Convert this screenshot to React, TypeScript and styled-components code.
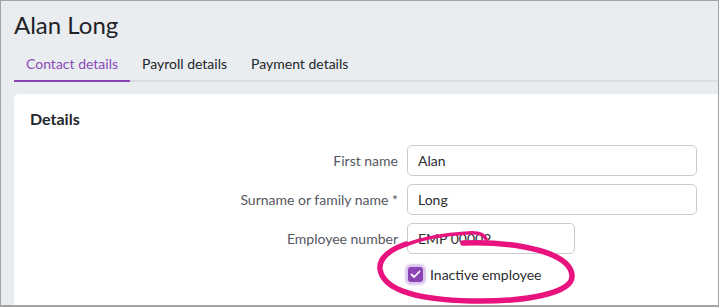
import React from "react";
import styled, { createGlobalStyle } from "styled-components";

const Global = createGlobalStyle`
  html, body { margin: 0; padding: 0; background: #ffffff; }
  body { font-family: "Lato", "Noto Sans", sans-serif; }
  * { box-sizing: border-box; }
`;

const Frame = styled.div`
  position: relative;
  width: 719px;
  height: 307px;
  overflow: hidden;
  background: #e9edf0;
  border-top: 1px solid #a3a3a3;
  border-left: 1px solid #a3a3a3;
  border-right: 1px solid #a3a3a3;
  border-bottom: 2px solid #a3a3a3;
  display: flex;
  flex-direction: column;
`;

const Header = styled.div`
  padding: 8px 0 0 13px;
`;

const Title = styled.h1`
  margin: 0;
  font-size: 24px;
  line-height: 32px;
  font-weight: 400;
  color: #1f2328;
`;

const Tabs = styled.div`
  display: flex;
  margin-top: 13px;
  border-bottom: 2px solid #dadee2;
`;

const Tab = styled.div<{ $active?: boolean }>`
  padding: 0 12px 6px;
  margin-bottom: -2px;
  font-size: 14px;
  line-height: 20px;
  color: ${(p) => (p.$active ? "#8a4bb8" : "#23262a")};
  border-bottom: 2px solid ${(p) => (p.$active ? "#8a44b4" : "transparent")};
`;

const Card = styled.div`
  margin: 12px 0 0 13px;
  flex: 1;
  background: #ffffff;
  border-radius: 5px 0 0 0;
  padding: 14px 0 0 16px;
`;

const CardTitle = styled.h2`
  margin: 0;
  font-size: 16px;
  line-height: 22px;
  font-weight: 700;
  color: #23262a;
`;

const Form = styled.div`
  margin-top: 15px;
  display: grid;
  grid-template-columns: 368px 290px;
  column-gap: 9px;
  row-gap: 8px;
  align-items: center;
`;

const Label = styled.label`
  text-align: right;
  font-size: 14px;
  color: #555862;
`;

const Input = styled.div<{ $w?: number }>`
  width: ${(p) => (p.$w ? `${p.$w}px` : "100%")};
  height: 31px;
  border: 1px solid #c9cbd0;
  border-radius: 5px;
  padding: 0 10px;
  display: flex;
  align-items: center;
  font-size: 14px;
  color: #2a2d31;
`;

const CheckRow = styled.div`
  grid-column: 2;
  display: flex;
  align-items: center;
  gap: 7px;
  padding-left: 1px;
  height: 24px;
`;

const Box = styled.span`
  width: 15px;
  height: 15px;
  border-radius: 3px;
  background: #8a44b4;
  box-shadow: 0 0 2px 3px rgba(150, 90, 200, 0.35);
  display: inline-flex;
  align-items: center;
  justify-content: center;
`;

const CheckText = styled.span`
  font-size: 14px;
  color: #2a2d31;
`;

const Scribble = styled.svg`
  position: absolute;
  left: 0;
  top: 0;
  pointer-events: none;
`;

export default function App() {
  return (
    <>
      <Global />
      <Frame>
        <Header>
          <Title>Alan Long</Title>
          <Tabs>
            <Tab $active>Contact details</Tab>
            <Tab>Payroll details</Tab>
            <Tab>Payment details</Tab>
          </Tabs>
        </Header>
        <Card>
          <CardTitle>Details</CardTitle>
          <Form>
            <Label>First name</Label>
            <Input>Alan</Input>
            <Label>Surname or family name *</Label>
            <Input>Long</Input>
            <Label>Employee number</Label>
            <Input $w={168}>EMP 00002</Input>
            <CheckRow>
              <Box>
                <svg width="11" height="9" viewBox="0 0 11 9">
                  <path d="M1.5 4.5 L4.2 7 L9.5 1.5" fill="none" stroke="#fff" strokeWidth="1.8" strokeLinecap="round" strokeLinejoin="round" />
                </svg>
              </Box>
              <CheckText>Inactive employee</CheckText>
            </CheckRow>
          </Form>
        </Card>
        <Scribble width="719" height="307" viewBox="0 0 719 307">
          <path
            d="M462 242 C522 240, 569 253, 571 274 C573 293, 522 301, 470 300 C420 299, 382 290, 379 268 C378 257, 388 249, 405 243"
            fill="none"
            stroke="#e8137e"
            strokeWidth="5.5"
            strokeLinecap="round"
          />
          <path
            d="M404 244 C425 236, 446 233, 466 232 C476 231, 483 233, 485 238"
            fill="none"
            stroke="#e8137e"
            strokeWidth="3.5"
            strokeLinecap="round"
          />
        </Scribble>
      </Frame>
    </>
  );
}
